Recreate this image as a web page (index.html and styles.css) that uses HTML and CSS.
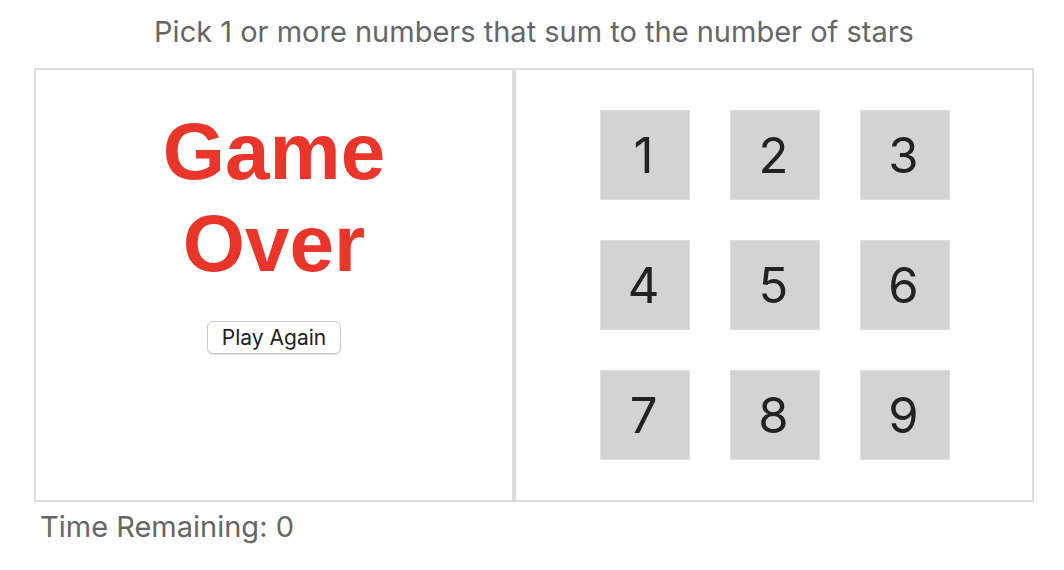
FILE: index.html
```html
<!DOCTYPE html>
<html lang="en">
<head>
<meta charset="utf-8">
<title>Stars Game</title>
<link rel="stylesheet" href="styles.css">
</head>
<body>
<div class="game">
  <div class="help">Pick 1 or more numbers that sum to the number of stars</div>
  <div class="body">
    <div class="left">
      <div class="game-done">
        <div class="message">Game Over</div>
        <button class="play-again">Play Again</button>
      </div>
    </div>
    <div class="right">
      <button class="number">1</button>
      <button class="number">2</button>
      <button class="number">3</button>
      <button class="number">4</button>
      <button class="number">5</button>
      <button class="number">6</button>
      <button class="number">7</button>
      <button class="number">8</button>
      <button class="number">9</button>
    </div>
  </div>
  <div class="timer">Time Remaining: 0</div>
</div>
</body>
</html>
```

FILE: styles.css
```css
html, body {
  margin: 0;
  padding: 0;
  background: #ffffff;
}

body {
  font-family: Inter, "Noto Sans", sans-serif;
}

.game {
  width: 1000px;
  margin-left: 34px;
}

.help {
  color: #666666;
  font-size: 29px;
  text-align: center;
  height: 68px;
  line-height: 64px;
}

.body {
  display: grid;
  grid-template-columns: 480px 520px;
  height: 434px;
}

.left {
  border: 2px solid #dddddd;
  display: flex;
  flex-direction: column;
  align-items: center;
}

.game-done {
  display: flex;
  flex-direction: column;
  align-items: center;
  padding-top: 36px;
}

.message {
  font-family: "Liberation Sans", Arial, sans-serif;
  font-weight: bold;
  font-size: 80px;
  color: #e9352a;
  text-align: center;
  width: 300px;
}

.play-again {
  margin-top: 31px;
  font-family: Inter, sans-serif;
  font-size: 21px;
  color: #222222;
  background: #ffffff;
  border: 1px solid #c9c9c9;
  border-radius: 6px;
  box-shadow: 0 1px 1px rgba(0, 0, 0, 0.12);
  width: 134px;
  height: 33px;
  padding: 0;
}

.right {
  border: 2px solid #dddddd;
  display: grid;
  grid-template-columns: repeat(3, 90px);
  grid-auto-rows: 90px;
  gap: 40px;
  justify-content: center;
  align-content: center;
  padding-left: 2px;
}

.number {
  background: #d3d3d3;
  border: 1px solid #dedede;
  font-family: Inter, sans-serif;
  font-size: 49px;
  color: #222222;
  padding: 0 3px 0 0;
  margin: 0;
}

.timer {
  color: #666666;
  font-size: 29px;
  padding-left: 6px;
  line-height: 50px;
}
```
